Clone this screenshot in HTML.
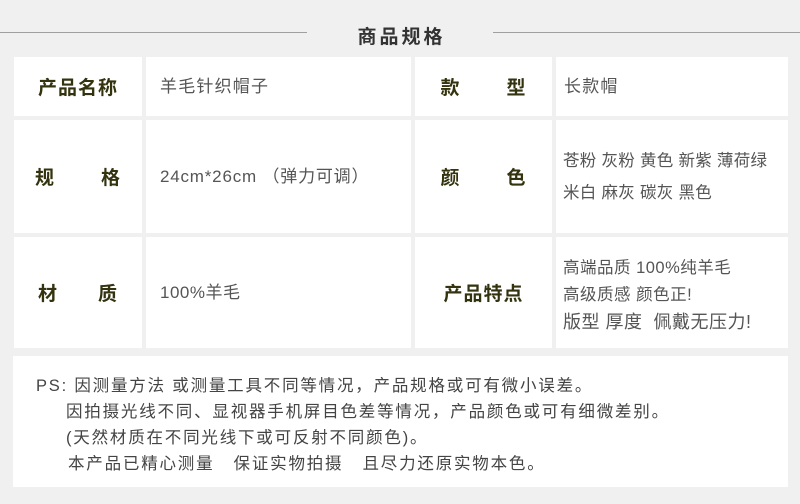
<!DOCTYPE html>
<html><head><meta charset="utf-8"><style>
*{margin:0;padding:0;box-sizing:border-box}
body{width:800px;height:504px;background:#f0f0f0;position:relative;overflow:hidden;font-family:"Liberation Sans","Noto Sans CJK SC",sans-serif}
.line{position:absolute;top:32px;height:1px;background:#a0a0a0}
.title{position:absolute;top:22px;left:300px;width:200px;text-align:center;font-size:19px;font-weight:bold;color:#333;letter-spacing:3px;padding-left:3px}
.c{position:absolute;background:#fff;display:flex;align-items:center}
.l{justify-content:center;font-size:19px;font-weight:bold;color:#33330f;letter-spacing:1px}
.v{padding-left:14px;font-size:17px;color:#555;line-height:26px;letter-spacing:1.2px;white-space:nowrap}
.g{display:inline-block;width:46px}
.n{position:absolute;left:13px;top:356px;width:775px;height:131px;background:#fff;font-size:16.5px;color:#444;letter-spacing:1.8px}
.n div{position:absolute;white-space:nowrap}
</style></head><body>
<div class="line" style="left:0;width:307px"></div>
<div class="line" style="left:493px;width:307px"></div>
<div class="title">商品规格</div>

<div class="c l" style="left:14px;top:57px;width:128px;height:59px">产品名称</div>
<div class="c v" style="left:146px;top:57px;width:265px;height:59px">羊毛针织帽子</div>
<div class="c l" style="left:415px;top:57px;width:137px;height:59px">款<span class="g"></span>型</div>
<div class="c v" style="left:556px;top:57px;width:232px;height:59px;padding-left:8px">长款帽</div>

<div class="c l" style="left:14px;top:120px;width:128px;height:113px">规<span class="g"></span>格</div>
<div class="c v" style="left:146px;top:120px;width:265px;height:113px;letter-spacing:0.8px">24cm*26cm （弹力可调）</div>
<div class="c l" style="left:415px;top:120px;width:137px;height:113px">颜<span class="g"></span>色</div>
<div class="c v" style="left:556px;top:120px;width:232px;height:113px;padding-left:7px;font-size:16.5px;line-height:32px;letter-spacing:0.3px"><div>苍粉 灰粉 黄色 新紫 薄荷绿<br>米白 麻灰 碳灰 黑色</div></div>

<div class="c l" style="left:14px;top:237px;width:128px;height:111px">材<span class="g" style="width:40px"></span>质</div>
<div class="c v" style="left:146px;top:237px;width:265px;height:111px;letter-spacing:0.5px">100%羊毛</div>
<div class="c l" style="left:415px;top:237px;width:137px;height:111px">产品特点</div>
<div class="c v" style="left:556px;top:237px;width:232px;height:111px;padding-left:7px;padding-top:6px;line-height:27px;letter-spacing:0.5px;font-size:16.5px"><div>高端品质 100%纯羊毛<br>高级质感 颜色正!<br><span style="font-size:18px">版型 厚度&nbsp; 佩戴无压力!</span></div></div>

<div class="n">
<div style="left:23px;top:16px">PS: 因测量方法 或测量工具不同等情况，产品规格或可有微小误差。</div>
<div style="left:53px;top:42px">因拍摄光线不同、显视器手机屏目色差等情况，产品颜色或可有细微差别。</div>
<div style="left:53px;top:68px">(天然材质在不同光线下或可反射不同颜色)。</div>
<div style="left:55px;top:94px">本产品已精心测量&nbsp;&nbsp; 保证实物拍摄&nbsp;&nbsp; 且尽力还原实物本色。</div>
</div>
</body></html>
